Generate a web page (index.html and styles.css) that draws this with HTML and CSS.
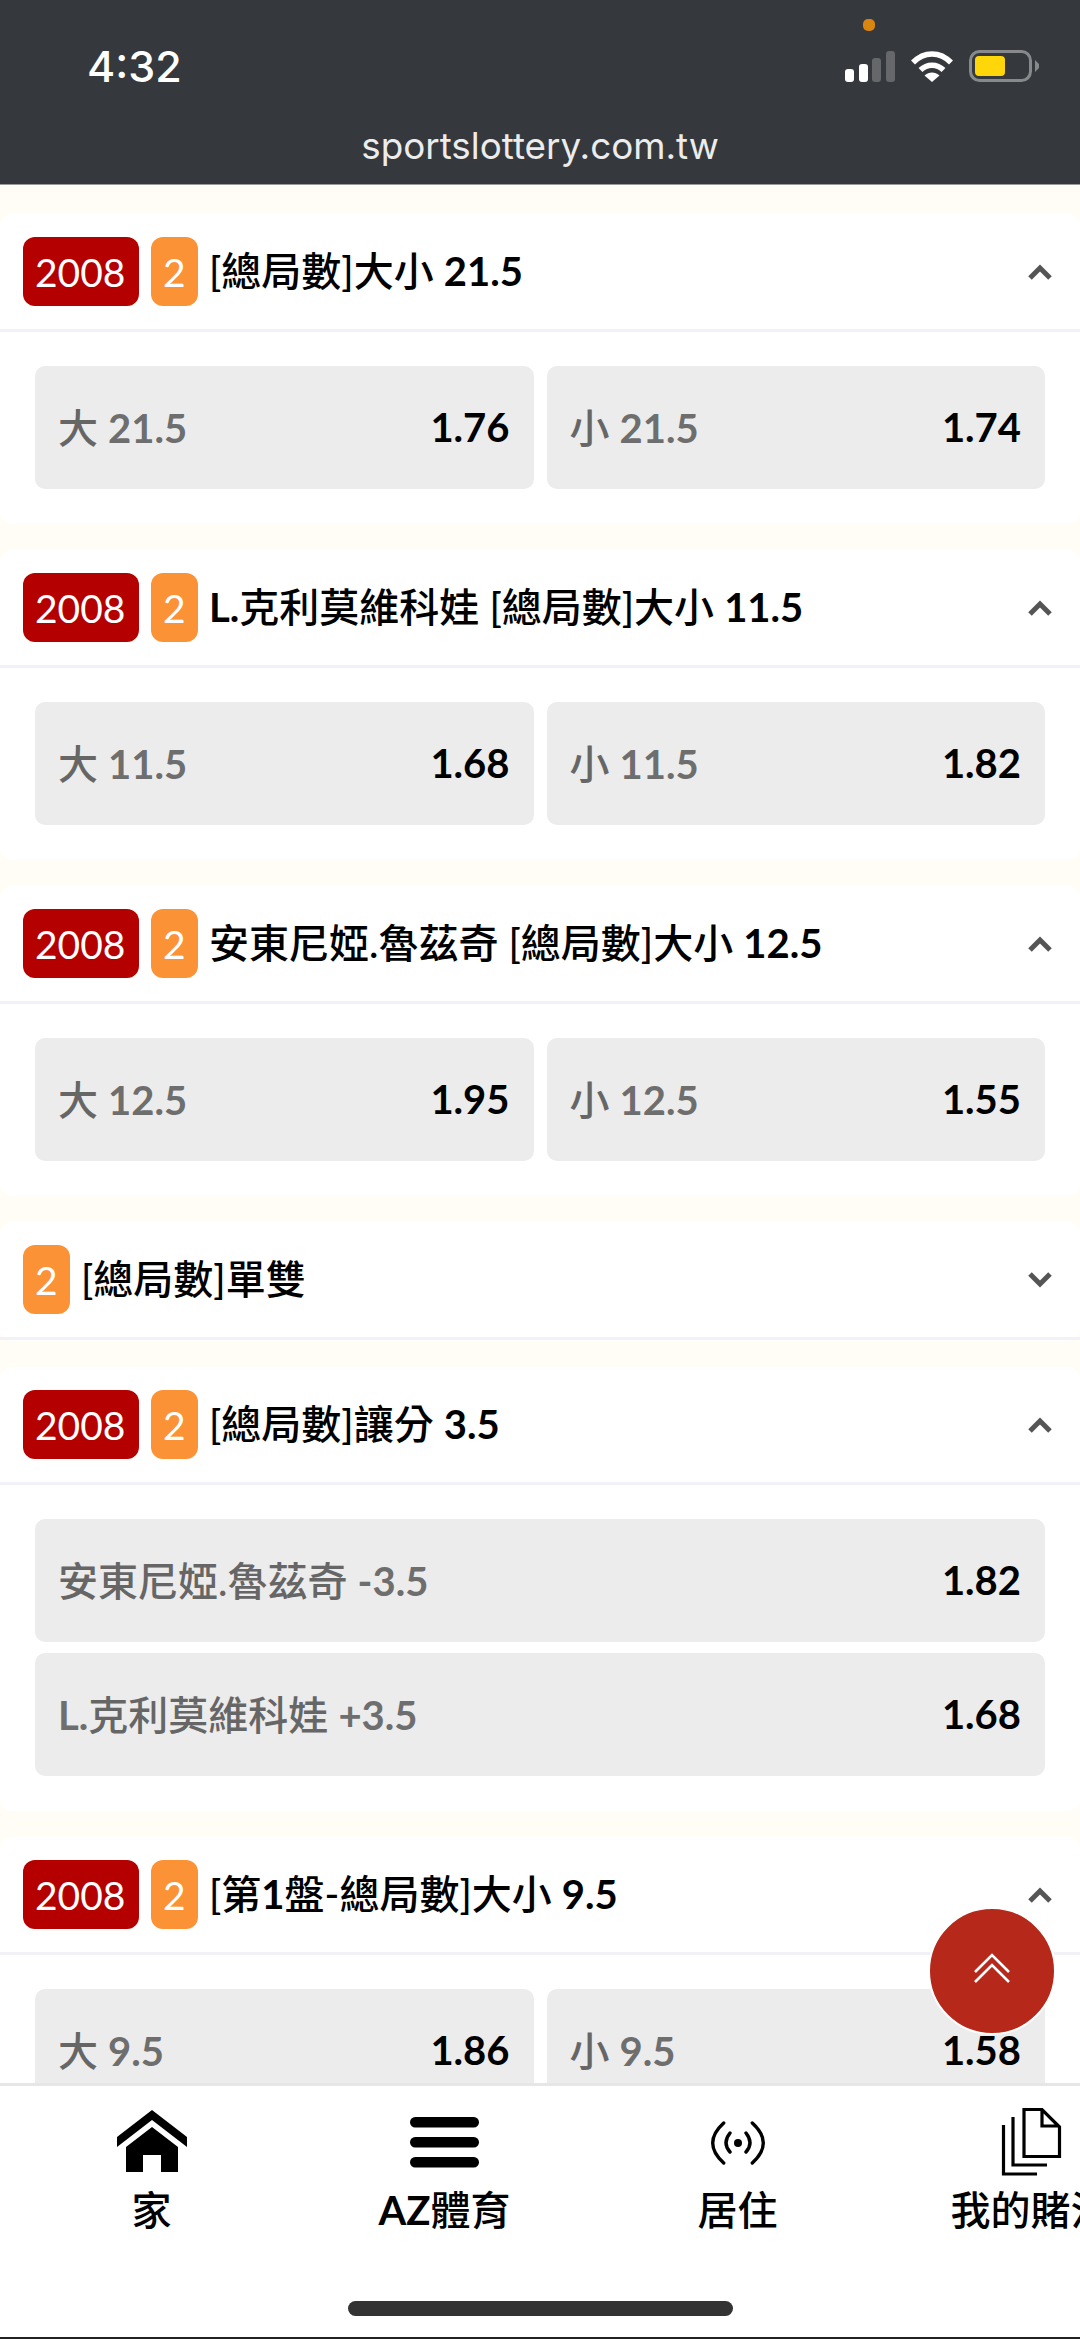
FILE: index.html
```html
<!DOCTYPE html>
<html lang="zh-Hant">
<head>
  <meta charset="UTF-8" />
  <meta name="viewport" content="width=device-width, initial-scale=1" />
  <title>sportslottery.com.tw</title>
  <link rel="stylesheet" href="styles.css">
</head>
<body>
  <div class="page">
    <header class="browser-bar">
      <span class="privacy-dot"></span>
      <div class="status-row">
        <span class="time">4:32</span>
        <div class="status-icons">
          <svg class="icon-signal" viewBox="0 0 50 31" width="50" height="31">
            <rect x="0" y="18" width="9" height="13" rx="3" fill="#fff"/>
            <rect x="14" y="13" width="9" height="18" rx="3" fill="#fff"/>
            <rect x="27" y="7" width="9" height="24" rx="3" fill="#65676a"/>
            <rect x="41" y="0" width="9" height="31" rx="3" fill="#65676a"/>
          </svg>
          <svg class="icon-wifi" viewBox="0 0 44 32" width="44" height="32">
            <path d="M3 12.5C14 1 30 1 41 12.5" fill="none" stroke="#fff" stroke-width="5.5"/>
            <path d="M10.5 20C17 13.5 27 13.5 33.5 20" fill="none" stroke="#fff" stroke-width="5.5"/>
            <path d="M14.5 25.5C19 21.5 25 21.5 29.5 25.5L22 32Z" fill="#fff"/>
          </svg>
          <svg class="icon-battery" viewBox="0 0 70 32" width="70" height="32">
            <rect x="1.5" y="1.5" width="60" height="29" rx="9" fill="none" stroke="#88898b" stroke-width="3"/>
            <rect x="6" y="6" width="30" height="20" rx="4" fill="#ffd60a"/>
            <path d="M66 10L70 14V18L66 22Z" fill="#88898b"/>
          </svg>
        </div>
      </div>
      <div class="url">sportslottery.com.tw</div>
    </header>

    <main class="market-list">
      <section class="card">
        <div class="card-head">
          <span class="badge badge-red">2008</span>
          <span class="badge badge-orange">2</span>
          <span class="card-title">[總局數]大小 <span class="latin">21.5</span></span>
          <svg class="chevron" viewBox="0 0 24 16" width="24" height="16"><path d="M2 14L12 4L22 14" /></svg>
        </div>
        <div class="card-body odds-grid">
          <div class="odd"><span class="odd-label">大 <span class="latin">21.5</span></span><span class="odd-value">1.76</span></div>
          <div class="odd"><span class="odd-label">小 <span class="latin">21.5</span></span><span class="odd-value">1.74</span></div>
        </div>
      </section>

      <section class="card">
        <div class="card-head">
          <span class="badge badge-red">2008</span>
          <span class="badge badge-orange">2</span>
          <span class="card-title"><span class="latin">L.</span>克利莫維科娃 [總局數]大小 <span class="latin">11.5</span></span>
          <svg class="chevron" viewBox="0 0 24 16" width="24" height="16"><path d="M2 14L12 4L22 14" /></svg>
        </div>
        <div class="card-body odds-grid">
          <div class="odd"><span class="odd-label">大 <span class="latin">11.5</span></span><span class="odd-value">1.68</span></div>
          <div class="odd"><span class="odd-label">小 <span class="latin">11.5</span></span><span class="odd-value">1.82</span></div>
        </div>
      </section>

      <section class="card">
        <div class="card-head">
          <span class="badge badge-red">2008</span>
          <span class="badge badge-orange">2</span>
          <span class="card-title">安東尼婭.魯茲奇 [總局數]大小 <span class="latin">12.5</span></span>
          <svg class="chevron" viewBox="0 0 24 16" width="24" height="16"><path d="M2 14L12 4L22 14" /></svg>
        </div>
        <div class="card-body odds-grid">
          <div class="odd"><span class="odd-label">大 <span class="latin">12.5</span></span><span class="odd-value">1.95</span></div>
          <div class="odd"><span class="odd-label">小 <span class="latin">12.5</span></span><span class="odd-value">1.55</span></div>
        </div>
      </section>

      <section class="card card-collapsed">
        <div class="card-head">
          <span class="badge badge-orange">2</span>
          <span class="card-title">[總局數]單雙</span>
          <svg class="chevron" viewBox="0 0 24 16" width="24" height="16"><path d="M2 2L12 12L22 2" /></svg>
        </div>
      </section>

      <section class="card">
        <div class="card-head">
          <span class="badge badge-red">2008</span>
          <span class="badge badge-orange">2</span>
          <span class="card-title">[總局數]讓分 <span class="latin">3.5</span></span>
          <svg class="chevron" viewBox="0 0 24 16" width="24" height="16"><path d="M2 14L12 4L22 14" /></svg>
        </div>
        <div class="card-body odds-stack">
          <div class="odd"><span class="odd-label">安東尼婭.魯茲奇 <span class="latin">-3.5</span></span><span class="odd-value">1.82</span></div>
          <div class="odd"><span class="odd-label"><span class="latin">L.</span>克利莫維科娃 <span class="latin">+3.5</span></span><span class="odd-value">1.68</span></div>
        </div>
      </section>

      <section class="card">
        <div class="card-head">
          <span class="badge badge-red">2008</span>
          <span class="badge badge-orange">2</span>
          <span class="card-title">[第<span class="latin">1</span>盤-總局數]大小 <span class="latin">9.5</span></span>
          <svg class="chevron" viewBox="0 0 24 16" width="24" height="16"><path d="M2 14L12 4L22 14" /></svg>
        </div>
        <div class="card-body odds-grid">
          <div class="odd"><span class="odd-label">大 <span class="latin">9.5</span></span><span class="odd-value">1.86</span></div>
          <div class="odd"><span class="odd-label">小 <span class="latin">9.5</span></span><span class="odd-value">1.58</span></div>
        </div>
      </section>
    </main>

    <button class="to-top" aria-label="top">
      <svg viewBox="0 0 38 30" width="38" height="30">
        <path d="M2 19L19 2L36 19M2 29L19 12L36 29" fill="none" stroke="#fff" stroke-width="2.6"/>
      </svg>
    </button>

    <nav class="tabbar">
      <div class="tabs">
        <div class="tab">
          <svg viewBox="0 0 70 72" width="70" height="72">
            <path d="M35 5L70 32V42L35 15L0 42V32Z"/>
            <path d="M35 22L9 42V67H26V50H44V67H61V42Z"/>
          </svg>
          <span class="tab-label">家</span>
        </div>
        <div class="tab">
          <svg viewBox="0 0 70 72" width="70" height="72">
            <rect x="0" y="12" width="69" height="10.5" rx="5.2"/>
            <rect x="0" y="32" width="69" height="10.5" rx="5.2"/>
            <rect x="0" y="52" width="69" height="10.5" rx="5.2"/>
          </svg>
          <span class="tab-label"><span class="latin">AZ</span>體育</span>
        </div>
        <div class="tab">
          <svg viewBox="0 0 54 72" width="54" height="72">
            <circle cx="27" cy="38" r="4"/>
            <path class="line" d="M19 28Q11 38 19 47M35 28Q43 38 35 47M12.7 18Q-9.3 38 12.7 58M41.3 18Q63.3 38 41.3 58" stroke-width="3.4" stroke-linecap="round"/>
          </svg>
          <span class="tab-label">居住</span>
        </div>
        <div class="tab">
          <svg viewBox="0 0 64 72" width="64" height="72">
            <path class="line" d="M25 4.5H43L60.5 22V51.5H25ZM43 4V21H60" stroke-width="3.2"/>
            <path class="line" d="M14 12V60H48M4.5 20V69H38" stroke-width="3.2"/>
          </svg>
          <span class="tab-label">我的賭注</span>
        </div>
      </div>
      <div class="home-indicator"></div>
    </nav>
  </div>
</body>
</html>
```

FILE: styles.css
```css
* {
  box-sizing: border-box;
}

body {
  margin: 0;
  font-family: Lato, "Noto Sans CJK TC", sans-serif;
  color: #000;
  background-color: #fffdf6;
}

.page {
  position: relative;
  display: flex;
  flex-direction: column;
  width: 1080px;
  height: 2339px;
  overflow: hidden;
  border-bottom: 2px solid #222;
}

/* browser chrome */
.browser-bar {
  position: relative;
  flex: none;
  height: 185px;
  padding: 50px 41px 0 87px;
  background-color: #35383c;
  border-bottom: 1px solid #9a9b9d;
  color: #fff;
}

.privacy-dot {
  position: absolute;
  top: 19px;
  left: 863px;
  width: 12px;
  height: 12px;
  border-radius: 5px;
  background-color: #d9850f;
}

.status-row {
  display: flex;
  justify-content: space-between;
  align-items: flex-start;
  height: 32px;
}

.time {
  font-family: Inter, sans-serif;
  font-size: 43px;
  font-weight: 500;
  line-height: 32px;
}

.status-icons {
  display: flex;
  align-items: flex-start;
  gap: 15px;
}

.icon-signal {
  margin-top: 1px;
}

.url {
  margin-top: 39px;
  margin-left: -87px;
  margin-right: -41px;
  font-family: Inter, sans-serif;
  font-size: 36.8px;
  line-height: 50px;
  text-align: center;
  color: #ececec;
}

/* market cards */
.market-list {
  flex: 1;
  min-height: 0;
  overflow: hidden;
  padding-top: 29px;
}

.card {
  margin-bottom: 26px;
  background-color: #fff;
  border-radius: 12px;
}

.card-collapsed {
  padding-bottom: 1px;
}

.card-head {
  display: flex;
  align-items: center;
  height: 118px;
  padding: 0 28px 0 23px;
  border-bottom: 3px solid #f1f1f7;
}

.badge {
  display: block;
  height: 69px;
  padding: 0 12px;
  border-radius: 12px;
  color: #fff;
  font-size: 39px;
  line-height: 71px;
}

.badge-red {
  width: 116px;
  margin-right: 12px;
  background-color: #b50000;
}

.badge-orange {
  width: 47px;
  margin-right: 11px;
  background-color: #fb9236;
}

.card-title {
  padding-bottom: 5px;
  font-size: 40px;
  font-weight: 500;
  white-space: nowrap;
}

.card-title .latin {
  font-weight: 700;
}

.chevron {
  margin-left: auto;
  fill: none;
  stroke: #555;
  stroke-width: 5;
}

.card-body {
  padding: 34px 35px 35px;
}

.odds-grid {
  display: grid;
  grid-template-columns: 1fr 1fr;
  gap: 13px;
}

.odds-stack {
  display: flex;
  flex-direction: column;
  gap: 11px;
}

.odd {
  display: flex;
  justify-content: space-between;
  align-items: center;
  height: 123px;
  padding: 0 24px 0 23px;
  border-radius: 10px;
  background-color: #ececec;
  font-size: 40px;
}

.odd-label {
  padding-bottom: 4px;
  color: #666;
  font-weight: 500;
}

.odd-label .latin {
  font-weight: 700;
  color: #6e6e6e;
}

.odd-value {
  padding-bottom: 2px;
  font-weight: 700;
}

/* floating button */
.to-top {
  position: absolute;
  right: 24px;
  bottom: 302px;
  display: flex;
  align-items: center;
  justify-content: center;
  width: 128px;
  height: 128px;
  padding: 0 0 6px;
  border: 2px solid #fff;
  border-radius: 50%;
  background-color: #b5281a;
}

/* bottom nav */
.tabbar {
  flex: none;
  height: 254px;
  padding-top: 19px;
  border-top: 3px solid #e6e6e6;
  background-color: #fff;
  overflow: hidden;
}

.tabs {
  display: flex;
  padding-left: 5px;
}

.tab {
  display: flex;
  flex: none;
  flex-direction: column;
  align-items: center;
  width: 293px;
}

.tab svg {
  display: block;
  fill: #000;
}

.tab svg .line {
  fill: none;
  stroke: #000;
}

.tab-label {
  margin-top: 11px;
  margin-bottom: 2px;
  font-size: 40px;
  font-weight: 500;
  line-height: 44px;
  white-space: nowrap;
}

.tab-label .latin {
  font-weight: 700;
}

.home-indicator {
  width: 385px;
  height: 15px;
  margin: 67px auto 0;
  border-radius: 8px;
  background-color: #333;
}
```
